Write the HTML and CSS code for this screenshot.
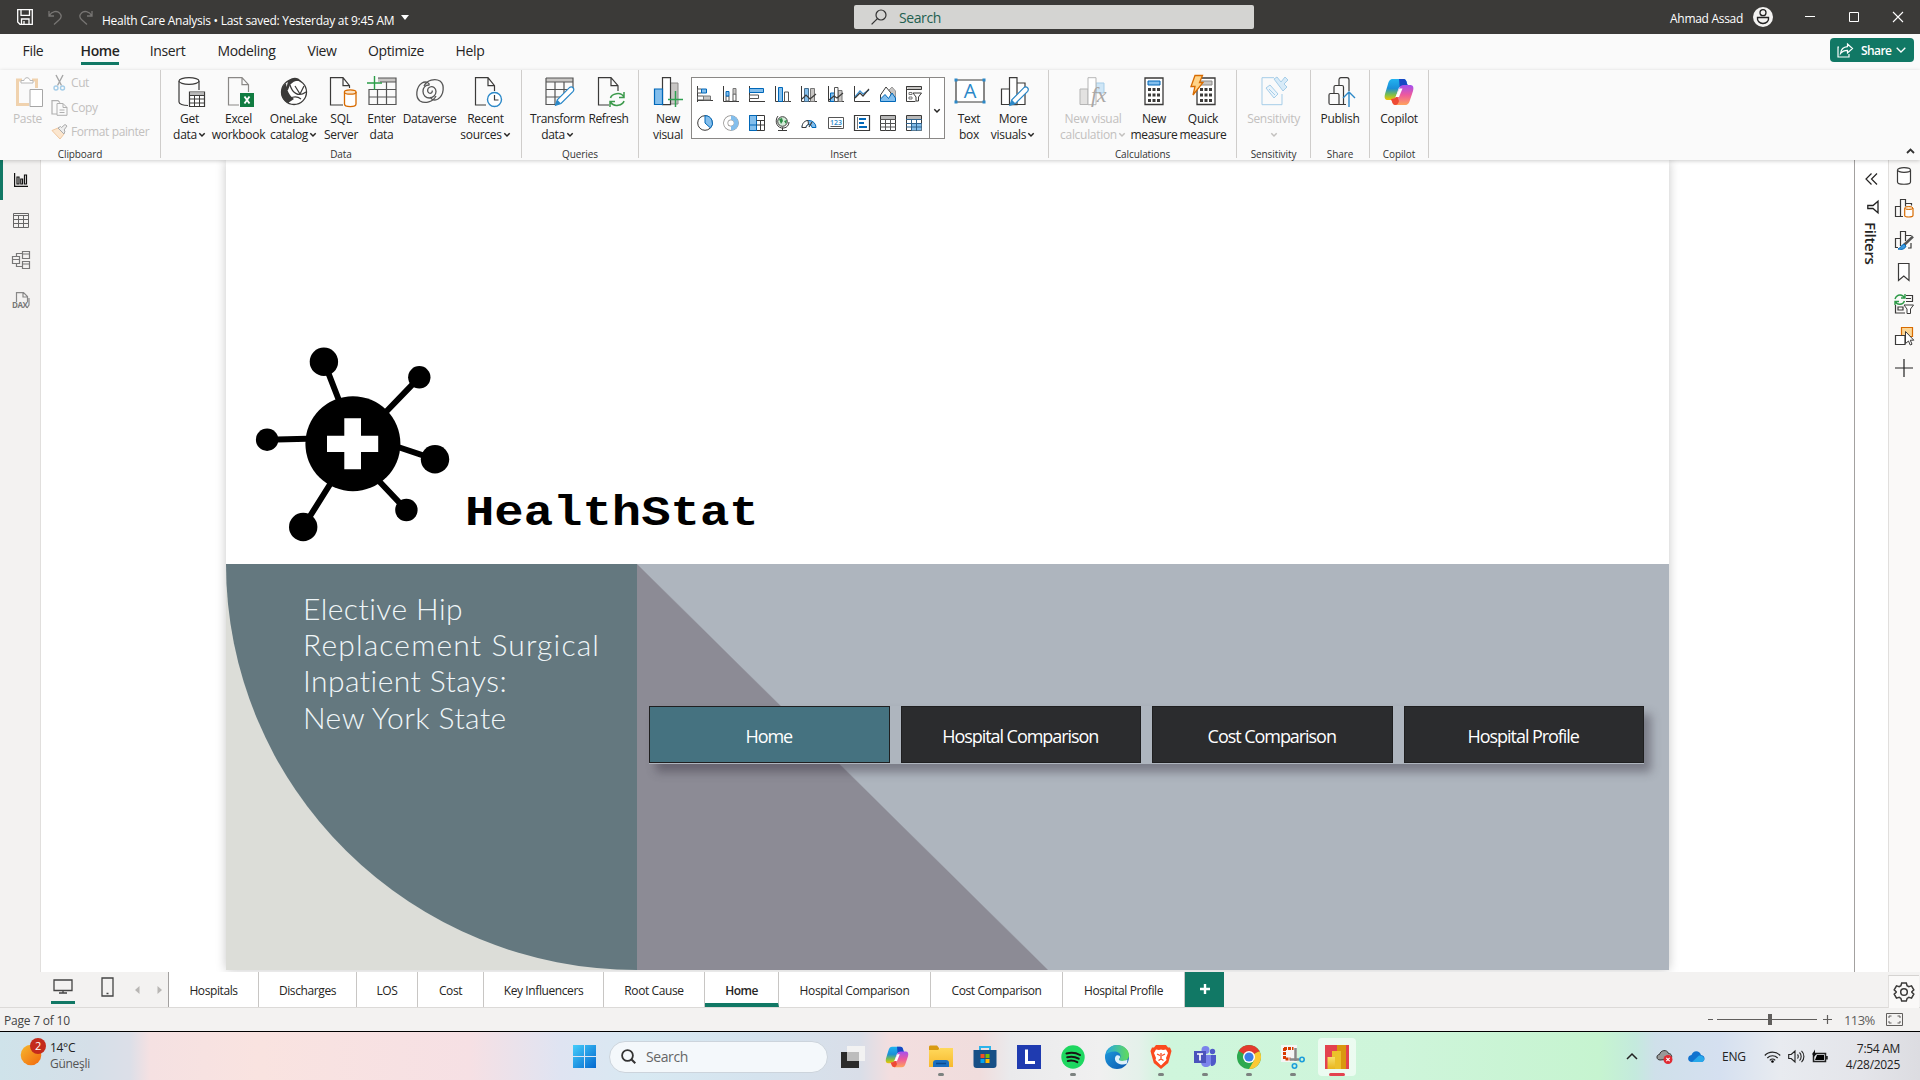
FILE: index.html
```html
<!DOCTYPE html>
<html lang="en">
<head>
<meta charset="utf-8">
<title>Health Care Analysis</title>
<link rel="stylesheet" href="styles.css">
</head>
<body>
<svg class="defs" width="0" height="0">
  <defs>
    <linearGradient id="cpA" x1="0" y1="0" x2="0" y2="1"><stop offset="0" stop-color="#22b4f0"/><stop offset=".45" stop-color="#1a8fd8"/><stop offset=".75" stop-color="#7fbf4a"/><stop offset="1" stop-color="#f5c400"/></linearGradient>
    <linearGradient id="cpB" x1="0" y1="0" x2="0" y2="1"><stop offset="0" stop-color="#a44ff0"/><stop offset=".5" stop-color="#ee5a9c"/><stop offset="1" stop-color="#ffa45c"/></linearGradient>
    <linearGradient id="edge" x1="0" y1="0" x2="1" y2="1"><stop offset="0" stop-color="#1f9fe0"/><stop offset="1" stop-color="#0b55ad"/></linearGradient>
    <linearGradient id="edge2" x1="0" y1="0" x2="1" y2="0"><stop offset="0" stop-color="#27a8e0"/><stop offset="1" stop-color="#62dc58"/></linearGradient>
    <linearGradient id="sun" x1="0" y1="0" x2="1" y2="1"><stop offset="0" stop-color="#f6b92e"/><stop offset="1" stop-color="#f2660c"/></linearGradient>
    <linearGradient id="win" x1="0" y1="0" x2="1" y2="1"><stop offset="0" stop-color="#45cdfb"/><stop offset="1" stop-color="#0468cf"/></linearGradient>
    <linearGradient id="fold" x1="0" y1="0" x2="0" y2="1"><stop offset="0" stop-color="#ffd95c"/><stop offset="1" stop-color="#f7b92e"/></linearGradient>
    <linearGradient id="pbi" x1="0" y1="0" x2="0" y2="1"><stop offset="0" stop-color="#f7df6a"/><stop offset="1" stop-color="#e8b51c"/></linearGradient>
    <symbol id="chev" viewBox="0 0 8 6"><path d="M1.3 1.3 4 4l2.7-2.7" fill="none" stroke="currentColor" stroke-width="1.5"/></symbol>
    <symbol id="copilot" viewBox="0 0 30 28">
      <path d="M9 1h10c3 0 3.500 2 4.200 5l.8 2h-5c-3 0-4 1-5 4l-2 6c-1 3-2 4-5 4H4c-3 0-4-2-3-6L4 6c1-3.500 2-5 5-5z" fill="url(#cpA)"/>
      <path d="M15 1h4c3 0 3.500 2 4.200 5l.8 2h-5c-1.500 0-2.500.3-3.300 1z" fill="#1747c4"/>
      <path d="M21 27H12c-3 0-3.500-2-4.200-4L7 21c3 0 5-1 6-4l2-6c1-3 2-4 5-4h6c3 0 4 2 3 6l-3 9c-1 3.500-2 5-5 5z" fill="url(#cpB)"/>
      <path d="M7 21c3 0 5-1 6-3l2 5c-1 3-2 4-3.500 4C9 27 8.500 25 7.800 23z" fill="#ee4a34"/>
      <path d="M15.500 10.500h3L15 19h-3.500z" fill="#fff"/>
    </symbol>
    <symbol id="pencil" viewBox="0 0 22 22"><path d="M1 21l2-6L16 2c3-2 6 1 4 4L7 19z" fill="#fff" stroke="#2b88c8" stroke-width="1.300"/><path d="M1 21l2-6 4 4z" fill="#2b88c8"/></symbol>
  </defs>
</svg>

<header class="titlebar">
  <div class="title-left">
    <svg class="i-save" width="16" height="16" viewBox="0 0 16 16"><path d="M.7.7h14.600v14.600H3L.7 13zM4 .7v5.600h8.500V.7M4.500 15v-5h7.500v5M7 15v-3" fill="none" stroke="#fff" stroke-width="1.300"/></svg>
    <svg class="i-undo" width="14" height="15" viewBox="0 0 14 15"><path d="M1 1v5h5M1 6C4 1 9 .5 11.500 3S13.500 8 11 10l-5 4.500" fill="none" stroke="#777573" stroke-width="1.300"/></svg>
    <svg class="i-redo" width="14" height="15" viewBox="0 0 14 15"><path d="M13 1v5H8M13 6C10 1 5 .5 2.500 3S.5 8 3 10l5 4.500" fill="none" stroke="#777573" stroke-width="1.300"/></svg>
    <span class="doc-name">Health Care Analysis • Last saved: Yesterday at 9:45 AM</span>
    <svg width="8" height="5" viewBox="0 0 8 5"><path d="M0 0h8L4 5z" fill="#fff"/></svg>
  </div>
  <div class="title-search">
    <svg width="16" height="16" viewBox="0 0 16 16"><circle cx="10" cy="6" r="5" fill="none" stroke="#333" stroke-width="1.200"/><path d="M6.400 9.600.6 15.400" stroke="#333" stroke-width="1.300"/></svg>
    <span>Search</span>
  </div>
  <div class="title-right">
    <span class="user">Ahmad Assad</span>
    <svg class="avatar" width="20" height="20" viewBox="0 0 20 20"><circle cx="10" cy="10" r="10" fill="#f3f2f1"/><circle cx="10" cy="5.700" r="3" fill="none" stroke="#222" stroke-width="1.300"/><path d="M4.500 10.500h11c.6 3.500-2 6-5.500 6s-6-2.500-5.500-6z" fill="none" stroke="#222" stroke-width="1.400"/></svg>
    <svg class="win-b" width="10" height="10" viewBox="0 0 10 10"><path d="M0 4.500h10" stroke="#fff"/></svg>
    <svg class="win-b" width="10" height="10" viewBox="0 0 10 10"><path d="M.5.5h9v9h-9z" fill="none" stroke="#fff"/></svg>
    <svg class="win-b" width="10" height="10" viewBox="0 0 10 10"><path d="M0 0l10 10M10 0 0 10" stroke="#fff" stroke-width="1.100"/></svg>
  </div>
</header>

<nav class="menu">
  <div class="menu-tabs">
    <span>File</span><span class="on">Home</span><span>Insert</span><span>Modeling</span><span>View</span><span>Optimize</span><span>Help</span>
  </div>
  <div class="share">
    <svg width="17" height="15" viewBox="0 0 17 15"><path d="M2 4H1v10h11v-3M10.500 1l5 4.500-5 4.500V7.300C7 7.300 5 8.500 3.500 10.500 4 6.500 6.500 4 10.500 3.700z" fill="none" stroke="#fff" stroke-width="1.200"/></svg>
    <span>Share</span>
    <svg width="10" height="6" viewBox="0 0 10 6"><path d="M.7.7 5 5 9.300.7" fill="none" stroke="#fff" stroke-width="1.300"/></svg>
  </div>
</nav>

<section class="ribbon">
  <div class="group g-clip">
    <div class="tools">
      <div class="btn dim nudge"><svg class="ico" width="28" height="30" viewBox="0 0 28 30"><path d="M6 3H1.500v24.500H13M16 3h4.500v8" fill="none" stroke="#f0d2ae" stroke-width="3"/><path d="M5 6V3.500h3C8.500-.2 13.500-.2 14 3.500h3V6z" fill="#fff" stroke="#b8b8b8"/><path d="M14 12.500h12.500v17H14z" fill="#fff" stroke="#a6a6a6"/></svg><span>Paste</span></div>
      <div class="clip-list dim">
        <div><svg width="17" height="16" viewBox="0 0 17 16"><path d="M5 0l5.500 10.500M12 0 6.500 10.500" stroke="#a6a6a6" stroke-width="1.400"/><circle cx="5" cy="13" r="2" fill="none" stroke="#a5cde8" stroke-width="1.400"/><circle cx="11.500" cy="13" r="2" fill="none" stroke="#a5cde8" stroke-width="1.400"/></svg><span>Cut</span></div>
        <div><svg width="17" height="16" viewBox="0 0 17 16"><path d="M6 14H1V.7h6l2 2" fill="none" stroke="#b0b0b0" stroke-width="1.200"/><path d="M6 3.500h6l4 4V15.300H6zM12 3.500v4h4M8.500 10h5M8.500 12.500h5" fill="none" stroke="#b0b0b0"/></svg><span>Copy</span></div>
        <div><svg width="17" height="16" viewBox="0 0 17 16"><path d="M1 6.500 7 4l6 6-4 5z" fill="#fbe6cf" stroke="#f0c8a0"/><path d="M7 4l6 6 1-3-1-1 3-4-2-1.500-3.500 3-1-1z" fill="#eee" stroke="#aaa"/></svg><span>Format painter</span></div>
      </div>
    </div>
    <div class="gname">Clipboard</div>
  </div>

  <div class="group g-data">
    <div class="tools">
      <div class="btn nudge"><svg class="ico" width="28" height="30" viewBox="0 0 28 30"><path d="M1 4v21c0 2 4 3.500 9 3.500M21 4v9" fill="none" stroke="#3b3a39" stroke-width="1.200"/><ellipse cx="11" cy="4" rx="10" ry="3.300" fill="#fff" stroke="#3b3a39" stroke-width="1.200"/><path d="M11.500 15h15v14.500h-15z" fill="#fff" stroke="#3b3a39" stroke-width="1.200"/><path d="M12 15.500h14v3H12z" fill="#b9b9b9"/><path d="M11.500 18.500h15M11.500 22h15M11.500 26h15M16.500 18.500v11M21.500 18.500v11" stroke="#3b3a39"/></svg><span>Get<br>data<svg class="chev"><use href="#chev"/></svg></span></div>
      <div class="btn nudge"><svg class="ico" width="28" height="30" viewBox="0 0 28 30"><path d="M12 28H1.500V.7H15l6.500 7V15M15 .7v7h6.500" fill="none" stroke="#8a8886" stroke-width="1.200"/><path d="M13 16h14v14H13z" fill="#107c41"/><path d="M17.500 19.500l5 7M22.500 19.500l-5 7" stroke="#fff" stroke-width="1.900"/></svg><span>Excel<br>workbook</span></div>
      <div class="btn"><svg class="ico" width="28" height="30" viewBox="0 0 28 30"><circle cx="14" cy="15" r="12.500" fill="#fff" stroke="#3b3a39" stroke-width="1.300"/><path d="M8 4C12-.5 18-.5 21 4c-4-1-8 0-11 4l-2 5-2 0zM6 6c1 8 3 12 8 16l-6 4C0 22-1 11 6 6z" fill="#3b3a39"/><path d="M10 8c2 7 8 13 16 7M8 26c0-6 8-8 13-4M15 9l5 8 4-8" fill="none" stroke="#3b3a39" stroke-width="1.200"/></svg><span>OneLake<br>catalog<svg class="chev"><use href="#chev"/></svg></span></div>
      <div class="btn nudge"><svg class="ico" width="28" height="30" viewBox="0 0 28 30"><path d="M14 28H1.500V.7H14l6.500 8V11M14 .7v8h6.500" fill="none" stroke="#3b3a39" stroke-width="1.200"/><path d="M15.500 15v12c0 3.500 11.500 3.500 11.500 0V15" fill="#fff" stroke="#d86b00" stroke-width="1.300"/><ellipse cx="21.200" cy="15" rx="5.800" ry="2.200" fill="#fbe3c6" stroke="#d86b00" stroke-width="1.300"/></svg><span>SQL<br>Server</span></div>
      <div class="btn"><svg class="ico" width="30" height="30" viewBox="0 0 30 30"><path d="M11 1h18v4H11z" fill="#c8c6c4"/><path d="M2 12v15.500h27V1H11M29 5H13M2 12.500h27M2 20h27M10.500 12v15.500M19.500 5v22.500" fill="none" stroke="#555" stroke-width="1.200"/><path d="M7.500-1v14M0 6h15" stroke="#2b9d48" stroke-width="1.400"/></svg><span>Enter<br>data</span></div>
      <div class="btn"><svg class="ico" width="30" height="30" viewBox="0 0 30 30"><g fill="none" stroke="#555" stroke-width="1.300"><path d="M21 19c-3 6-11 8-16 5-5-4-4-14 2-18 4-2.500 8 .5 7 2-4 0-6 3-6 6.500 0 4 3 6.500 6.500 6.500S21 18 21 14.500 18 9 15 10s-3 5-1 6 4-1 3-2.500"/><path d="M9 9c3-6 11-8 16-5 5 4 4 14-2 18-4 2.500-8-.5-7-2"/></g></svg><span>Dataverse</span></div>
      <div class="btn nudge"><svg class="ico" width="28" height="30" viewBox="0 0 28 30"><path d="M12 28H1.500V.7H14l6.500 8V14M14 .7v8h6.500" fill="none" stroke="#3b3a39" stroke-width="1.200"/><circle cx="20.500" cy="22.500" r="7" fill="#fff" stroke="#2b88c8" stroke-width="1.400"/><path d="M20.500 18v5h4" fill="none" stroke="#3b3a39" stroke-width="1.200"/></svg><span>Recent<br>sources<svg class="chev"><use href="#chev"/></svg></span></div>
    </div>
    <div class="gname">Data</div>
  </div>

  <div class="group g-query">
    <div class="tools">
      <div class="btn nudge"><svg class="ico" width="30" height="30" viewBox="0 0 30 30"><path d="M1 1h27v4H1z" fill="#c8c6c4"/><path d="M1 1h27v11M1 1v26.500h10M1 5h27M1 12.500h23M1 20h15M10 5v22M19 5v12" fill="none" stroke="#555" stroke-width="1.200"/><use href="#pencil" x="9.500" y="8.500" width="20.500" height="21"/></svg><span>Transform<br>data<svg class="chev"><use href="#chev"/></svg></span></div>
      <div class="btn nudge"><svg class="ico" width="28" height="30" viewBox="0 0 28 30"><path d="M12 28H1.500V.7H14l7 8V14M14 .7v8h7" fill="none" stroke="#3b3a39" stroke-width="1.200"/><path d="M13.500 21c1-4 10-7 13.500-1M27 15v5.500h-5M27 24c-1 4-10 7-13.500 1M13 30v-5.500h5" fill="none" stroke="#3c9a4c" stroke-width="1.500"/></svg><span>Refresh</span></div>
    </div>
    <div class="gname">Queries</div>
  </div>

  <div class="group g-insert">
    <div class="tools">
      <div class="btn"><svg class="ico" width="30" height="30" viewBox="0 0 30 30"><path d="M17 6h8v21h-8z" fill="#c8c6c4" stroke="#8a8886"/><path d="M9.500.7h8v27h-8z" fill="#fff" stroke="#3b3a39" stroke-width="1.200"/><path d="M1.500 12h8v15.500h-8z" fill="#83beec" stroke="#0067b8" stroke-width="1.200"/><path d="M22.500 14v16M15 22.500h15" stroke="#2ea050" stroke-width="1.500"/></svg><span>New<br>visual</span></div>
      <div class="gallery">
        <div class="vis">
          <svg viewBox="0 0 16 16"><path d="M.5 0v16M.5 14.500H16" stroke="#3b3a39"/><path d="M.5 3h4v4h-4zM.5 10h6v4h-6z" fill="#fff" stroke="#555"/><path d="M4.500 3h5v4h-5z" fill="#83beec" stroke="#0067b8"/><path d="M6.500 10h7v4h-7z" fill="#c8c6c4" stroke="#777"/></svg>
          <svg viewBox="0 0 16 16"><path d="M.5 0v15.500H16" fill="none" stroke="#3b3a39"/><path d="M3 10h3v5H3zM10 8h3v7h-3z" fill="#fff" stroke="#555"/><path d="M3 5.500h3V10H3z" fill="#83beec" stroke="#0067b8"/><path d="M10 2.500h3V8h-3z" fill="#c8c6c4" stroke="#777"/></svg>
          <svg viewBox="0 0 16 16"><path d="M.5 0v16M.5 15.500H16" stroke="#3b3a39"/><path d="M.5 2.500h14v4H.5z" fill="#83beec" stroke="#0067b8"/><path d="M.5 9h9v3.500h-9z" fill="#fff" stroke="#555"/></svg>
          <svg viewBox="0 0 16 16"><path d="M.5 0v15.500H16" fill="none" stroke="#3b3a39"/><path d="M3.500 1.500h4v14h-4z" fill="#83beec" stroke="#0067b8"/><path d="M9.500 6h4v9.500h-4z" fill="#fff" stroke="#555"/></svg>
          <svg viewBox="0 0 16 16"><path d="M.5 0v15.500H16" fill="none" stroke="#3b3a39"/><path d="M3.500 2.500h4v13h-4z" fill="#83beec" stroke="#4a6f8c"/><path d="M9.500 2.500h4v13h-4z" fill="#c8c6c4" stroke="#777"/><path d="M1 13l4-4 4 4 6-5" fill="none" stroke="#3b3a39" stroke-width="1.200"/></svg>
          <svg viewBox="0 0 16 16"><path d="M.5 0v15.500H16" fill="none" stroke="#3b3a39"/><path d="M2.500 7h4v8.500h-4z" fill="#83beec" stroke="#0067b8"/><path d="M10 4.500h4v11h-4z" fill="#c8c6c4" stroke="#777"/><path d="M6.500 1.500H10v14H6.500z" fill="#fff" stroke="#555"/><path d="M1 14l5-4 3 2 6-5" fill="none" stroke="#3b3a39" stroke-width="1.200"/></svg>
          <svg viewBox="0 0 16 16"><path d="M.5 0v15.500H16" fill="none" stroke="#3b3a39"/><path d="M1 11l5-6 3 3 6-4" fill="none" stroke="#3a8fd0" stroke-width="1.300"/><path d="M1 12l5-5 3 3 6-7" fill="none" stroke="#3b3a39" stroke-width="1.200"/></svg>
          <svg viewBox="0 0 16 16"><path d="M8 5l4-4 3.500 4v10H8z" fill="#c8c6c4" stroke="#999"/><path d="M.5 15V9L6 1l5 6v8z" fill="#fff" stroke="#3b3a39"/><path d="M.5 15.500V13L5 8.500l3.500 4L12 7l3.500 5v3.500z" fill="#83beec" stroke="#0067b8"/></svg>
          <svg viewBox="0 0 16 16"><path d="M.5.500h15v3H.5zM.5.500v15h9" fill="#c8c6c4" stroke="#3b3a39"/><path d="M1 4h8v11H1z" fill="#fff"/><path d="M3 6.500h3v2H3zM3 11h3v2H3z" fill="none" stroke="#777"/><path d="M7 7h8.500L12.500 11v4h-2.500v-4z" fill="#fff" stroke="#3b3a39"/></svg>
          <svg viewBox="0 0 16 16"><circle cx="8" cy="8" r="7.300" fill="#fff" stroke="#3b3a39"/><path d="M8 .7A7.300 7.300 0 0 1 13.500 13L8 8z" fill="#83beec" stroke="#0067b8"/></svg>
          <svg viewBox="0 0 16 16"><circle cx="8" cy="8" r="5.300" fill="none" stroke="#8a8886" stroke-width="5"/><circle cx="8" cy="8" r="5.300" fill="none" stroke="#fff" stroke-width="3.600"/><path d="M8 2.700A5.300 5.300 0 0 1 8 13.300" fill="none" stroke="#83beec" stroke-width="4.500"/></svg>
          <svg viewBox="0 0 16 16"><path d="M.5.500h15v15H.5z" fill="#fff" stroke="#3b3a39"/><path d="M.5.500h7v15h-7zM.5 10h7" fill="#83beec" stroke="#0067b8"/><path d="M7.500 5.500h8M11.500 5.500v10M11.500 10H16M7.500 10h4" stroke="#3b3a39"/></svg>
          <svg viewBox="0 0 16 16"><circle cx="7.500" cy="6.500" r="4.800" fill="#d5ecd9" stroke="#3b3a39"/><path d="M4 4l3-1 1 3-2 3zM9 6l3-1-1 4z" fill="#2c8c45"/><path d="M3 1C-1 6 2 14 9 13M9 13c3-.5 5-3 5-6M3 15.500h9M7.500 12.500v3" fill="none" stroke="#3b3a39"/></svg>
          <svg viewBox="0 0 16 16"><path d="M1 12.500a7 7 0 0 1 14 0h-4a3 3 0 0 0-6 0z" fill="#83beec" stroke="#0067b8"/><path d="M1 12.500C1 8 4 5.500 7 5.500l.5 4C6 9.500 5 11 5 12.500z" fill="#fff" stroke="#3b3a39"/><path d="M8 12l3-5" stroke="#3b3a39" stroke-width="1.200"/></svg>
          <svg viewBox="0 0 16 16"><path d="M.5 2.500h15v11H.5zM2.500 11.500h11" fill="#fff" stroke="#555"/><text x="8" y="10" class="v123">123</text></svg>
          <svg viewBox="0 0 16 16"><path d="M.5.500h15v15H.5z" fill="#fff" stroke="#3b3a39" stroke-width="1.200"/><path d="M3.500 2v12" stroke="#777"/><path d="M5 4h7M5 8h5M5 12h8" stroke="#0067b8" stroke-width="2"/></svg>
          <svg viewBox="0 0 16 16"><path d="M.5.500h15v15H.5z" fill="#fff" stroke="#3b3a39"/><path d="M1 1h14v3H1z" fill="#b9b9b9"/><path d="M0 4.500h16M0 8.500h16M0 12h16M5.500 4v12M10.500 4v12" stroke="#555"/></svg>
          <svg viewBox="0 0 16 16"><path d="M.5.500h15v15H.5z" fill="#fff" stroke="#3b3a39"/><path d="M1 1h14v3H1z" fill="#b9b9b9"/><path d="M5.500 8.500h10v7h-10z" fill="#83beec"/><path d="M0 4.500h16M0 8.500h16M0 12h16M5.500 4v12M10.500 4v12" stroke="#2f628c"/></svg>
        </div>
        <div class="more"><svg width="8" height="6"><use href="#chev"/></svg></div>
      </div>
      <div class="btn"><svg class="ico" width="31" height="30" viewBox="0 0 31 30"><path d="M2 3h28v22H2z" fill="#fff" stroke="#3b3a39" stroke-width="1.200"/><path d="M.5 1.500h3v3h-3zM28.500 1.500h3v3h-3zM.5 23.500h3v3h-3zM28.500 23.500h3v3h-3z" fill="#2b88c8"/><text x="16" y="21" class="bigA">A</text></svg><span>Text<br>box</span></div>
      <div class="btn nudge"><svg class="ico" width="30" height="30" viewBox="0 0 30 30"><path d="M1.500 12h8v15.500h-8zM17 6h8v21.500h-8zM9.500.7h7.500v27H9.500z" fill="#fff" stroke="#3b3a39" stroke-width="1.200"/><use href="#pencil" x="9" y="8.500" width="20.500" height="21"/></svg><span>More<br>visuals<svg class="chev"><use href="#chev"/></svg></span></div>
    </div>
    <div class="gname">Insert</div>
  </div>

  <div class="group g-calc">
    <div class="tools">
      <div class="btn dim"><svg class="ico" width="28" height="30" viewBox="0 0 28 30"><path d="M17 6h8v10h-8z" fill="#cfe6f6" stroke="#a5cde8"/><path d="M1 12h8v15.500H1z" fill="#e3e2e1" stroke="#b5b5b5"/><path d="M9 .7h8v27H9z" fill="#fff" stroke="#b5b5b5"/><text x="12" y="25" class="fx">fx</text></svg><span>New visual<br>calculation<svg class="chev"><use href="#chev"/></svg></span></div>
      <div class="btn"><svg class="ico" width="20" height="30" viewBox="0 0 20 30"><path d="M1 1h18v26.500H1z" fill="#fff" stroke="#3b3a39" stroke-width="1.300"/><path d="M4 4h12v4H4z" fill="#83beec" stroke="#0067b8"/><path d="M5.500 11v14M10 11v14M14.500 11v14" stroke="#3b3a39" stroke-width="3" stroke-dasharray="3 2.500"/></svg><span>New<br>measure</span></div>
      <div class="btn"><svg class="ico" width="28" height="30" viewBox="0 0 28 30"><path d="M8 1h18v26.500H8z" fill="#fff" stroke="#3b3a39" stroke-width="1.300"/><path d="M11 4h12v4H11z" fill="#c8c6c4" stroke="#8a8886"/><path d="M12.500 11v14M17 11v14M21.500 11v14" stroke="#3b3a39" stroke-width="3" stroke-dasharray="3 2.500"/><path d="M6-1.500h7.500l-3 7H14L4 18l2-8.500H2z" fill="#ffd488" stroke="#d86b00" stroke-width="1.300"/></svg><span>Quick<br>measure</span></div>
    </div>
    <div class="gname">Calculations</div>
  </div>

  <div class="group g-sens">
    <div class="tools">
      <div class="btn dim"><svg class="ico" width="28" height="30" viewBox="0 0 28 30"><path d="M14 .7H2v27h20V17" fill="none" stroke="#a5cde8"/><path d="M6 11l4-3 8 9-4 4zM9 12l6 6" fill="#eaf4fb" stroke="#a5cde8"/><path d="M14 2l3-2 4 5 4-5 3 3-4 4 3 3-4 4z" fill="#d8ebf8" stroke="#a5cde8"/></svg><span>Sensitivity<br><svg class="chev"><use href="#chev"/></svg></span></div>
    </div>
    <div class="gname">Sensitivity</div>
  </div>
  <div class="group g-pub">
    <div class="tools">
      <div class="btn nudge"><svg class="ico" width="28" height="30" viewBox="0 0 28 30"><path d="M18 27.500H2.500c-1 0-1.500-.5-1.500-1.500v-8c0-1 .5-1.500 1.500-1.500H6V10c0-1 .5-1.500 1.500-1.500H11V3c0-1.500.5-2.300 2-2.300h6c1.500 0 2 .8 2 2.300v11M6 16.500h3.500c1 0 1.500.5 1.500 1.500v9.500M11 8.500h3c1 0 1.500.5 1.500 1.500v17.500" fill="none" stroke="#3b3a39" stroke-width="1.200"/><path d="M21 30V15M15 21l6-6 6 6" fill="none" stroke="#2b88c8" stroke-width="1.400"/></svg><span>Publish</span></div>
    </div>
    <div class="gname">Share</div>
  </div>
  <div class="group g-cop">
    <div class="tools">
      <div class="btn"><svg class="ico" width="30" height="28"><use href="#copilot"/></svg><span>Copilot</span></div>
    </div>
    <div class="gname">Copilot</div>
  </div>
  <svg class="collapse" width="9" height="6" viewBox="0 0 9 6"><path d="M1 5l3.500-3.500L8 5" fill="none" stroke="#333" stroke-width="1.800"/></svg>
</section>

<main class="work">
  <aside class="rail-l">
    <div class="on"><svg width="14" height="14" viewBox="0 0 14 14"><path d="M.6 0v13.400H14M3 4h2v7H3zM6.800 6h1.800v5H6.800zM10.500 2h2v9h-2z" fill="none" stroke="#111" stroke-width="1.200"/></svg></div>
    <div><svg width="16" height="15" viewBox="0 0 16 15"><path d="M.5.500h15v14H.5zM.5 2.500h15M.5 6.500h15M.5 10.500h15M5.500 2.500v12M10.500 2.500v12" fill="none" stroke="#666"/></svg></div>
    <div><svg width="18" height="18" viewBox="0 0 18 18"><path d="M.5 5.500h7v7h-7zM.5 8.500h7M10.500.500h7v7h-7zM10.500 3h7M10.500 10.500h7v7h-7zM10.500 13h7M4.500 5.500v-3h6M4.500 12.500v3h6" fill="none" stroke="#777" stroke-width="1.200"/></svg></div>
    <div><svg width="18" height="17" viewBox="0 0 18 17"><path d="M4.500 10V.6h7l4 4V10M11 .6V5h4.500M17 6v7l-2 3" fill="none" stroke="#888" stroke-width="1.200"/><text x="0" y="16" class="dax">DAX</text></svg></div>
  </aside>

  <div class="canvas">
    <div class="page">
      <div class="page-top">
        <svg class="logo" width="570" height="230" viewBox="246 334 570 230">
          <g stroke="#000" stroke-width="6"><path d="M323.900 361.700 340 403M419.300 377.300 383 415M267.100 439.700l40-1M435 459.300 395 446M406.400 510 378 480M303.200 527l27-43" fill="none"/></g>
          <circle cx="352.900" cy="443.700" r="47.500"/><circle cx="323.900" cy="361.700" r="14.200"/><circle cx="419.300" cy="377.300" r="11.200"/><circle cx="267.100" cy="439.700" r="11.200"/><circle cx="435" cy="459.300" r="14.200"/><circle cx="406.400" cy="510" r="11.200"/><circle cx="303.200" cy="527" r="14.200"/>
          <path d="M344.300 418.300H361v17.400h17.200V452H361v17.300h-16.700V452H327v-16.300h17.300z" fill="#fff"/>
          <text transform="translate(465 524.500) scale(1.020 .9)" class="brand">HealthStat</text>
        </svg>
      </div>
      <div class="page-bottom">
        <div class="teal-wrap"><div class="teal">Elective Hip<br><span class="wide">Replacement Surgical</span><br>Inpatient Stays:<br>New York State</div></div>
        <div class="grey">
          <div class="navs"><span class="on">Home</span><span>Hospital Comparison</span><span>Cost Comparison</span><span>Hospital Profile</span></div>
        </div>
      </div>
    </div>
  </div>

  <aside class="filters">
    <svg width="13" height="12" viewBox="0 0 13 12"><path d="M6.500.500 1 6l5.500 5.500M12 .5 6.500 6l5.500 5.500" fill="none" stroke="#252423" stroke-width="1.200"/></svg>
    <svg width="12" height="14" viewBox="0 0 12 14"><path d="M11 1.200v11.600L6 8.500H.8v-3H6z" fill="none" stroke="#222" stroke-width="1.300"/></svg>
    <span>Filters</span>
  </aside>

  <aside class="rail-r">
    <svg width="20" height="20" viewBox="0 0 20 20"><path d="M3.500 4v12c0 3 13 3 13 0V4" fill="#fff" stroke="#3b3a39" stroke-width="1.200"/><ellipse cx="10" cy="4" rx="6.500" ry="2.300" fill="#fff" stroke="#3b3a39" stroke-width="1.200"/></svg>
    <svg width="20" height="20" viewBox="0 0 20 20"><path d="M9 18.500H1.500v-10h5M6.500 18.500V1.500h5v7M11.500 5.500h6v2" fill="none" stroke="#3b3a39" stroke-width="1.200"/><path d="M10.700 10v7.500c0 2 8.300 2 8.300 0V10" fill="#fff" stroke="#d86b00" stroke-width="1.200"/><ellipse cx="14.800" cy="10" rx="4.100" ry="1.500" fill="#fbe3c6" stroke="#d86b00"/></svg>
    <svg width="20" height="20" viewBox="0 0 20 20"><path d="M4 17.500H1.500v-9h5M6.500 16V1.500h5V11M11.500 5.500h6M17 13v5h-3" fill="none" stroke="#3b3a39" stroke-width="1.200"/><path d="M19 6.500 10 15" stroke="#555" stroke-width="2.500"/><path d="M4 19c3-1 3-4 6-5l2 2c-1 3-4 4-8 3z" fill="#3d9be0" stroke="#0067b8"/></svg>
    <svg width="20" height="20" viewBox="0 0 20 20"><path d="M4.500 1.500h10.500v17l-5.200-4.500-5.300 4.500z" fill="#fff" stroke="#3b3a39" stroke-width="1.200"/></svg>
    <svg width="20" height="20" viewBox="0 0 20 20"><path d="M12 1.500h6.500v6M12 4.500h5M1.500 11v8H11M4 13h5v3H4zM12 7.500h7" fill="none" stroke="#3b3a39" stroke-width="1.200"/><path d="M1 5C3-.5 9 0 10.500 4M11 0v4H7M10.500 7C9 11 3 11.500 1.500 7.500M1 11V7.500h4" fill="none" stroke="#2e9a48" stroke-width="1.400"/><path d="M10 11h9.500l-3 4v4.500h-3.500V15z" fill="#fff" stroke="#3b3a39"/></svg>
    <svg width="20" height="20" viewBox="0 0 20 20"><path d="M7.500 1.500h11v9h-11z" fill="#fbd695" stroke="#d86b00" stroke-width="1.200"/><path d="M1.500 9.500H11v9H1.500z" fill="#fff" stroke="#3b3a39" stroke-width="1.200"/><path d="M11.500 5.500v12l3-2.500 1.700 4 1.800-.8-1.700-4h3.500z" fill="#fff" stroke="#3b3a39"/></svg>
    <svg width="20" height="20" viewBox="0 0 20 20"><path d="M10 1v18M1 10h18" stroke="#222" stroke-width="1.200"/></svg>
    <div class="gear"><svg width="22" height="22" viewBox="-11 -11 22 22"><path d="M-2.300-9h4.600l.8 2.700 1.700 1 2.700-.8 2.300 4-2 1.900v.5l2 1.900-2.300 4-2.700-.8-1.700 1-.8 2.700h-4.600l-.8-2.700-1.700-1-2.700.8-2.300-4 2-1.900v-.5l-2-1.900 2.300-4 2.700.8 1.700-1z" fill="none" stroke="#3b3a39" stroke-width="1.500"/><circle r="3.300" fill="none" stroke="#3b3a39" stroke-width="1.500"/></svg></div>
  </aside>
</main>

<div class="pagebar">
  <div class="modes">
    <div class="mode on"><svg width="20" height="15" viewBox="0 0 20 15"><path d="M1 1h18v10.500H1zM10 11.500V14M6 14h8" fill="none" stroke="#444" stroke-width="1.300"/></svg></div>
    <div class="mode"><svg width="13" height="20" viewBox="0 0 13 20"><path d="M1 1h11v18H1z" fill="none" stroke="#444" stroke-width="1.300"/><path d="M5.500 16.500h2" stroke="#444" stroke-width="1.500"/></svg></div>
    <svg class="ar" width="5" height="8" viewBox="0 0 5 8"><path d="M4.500 0v8L0 4z" fill="#b8b6b4"/></svg>
    <svg class="ar2" width="5" height="8" viewBox="0 0 5 8"><path d="M.5 0v8L5 4z" fill="#b8b6b4"/></svg>
  </div>
  <div class="tabs">
    <span>Hospitals</span><span>Discharges</span><span>LOS</span><span>Cost</span><span>Key Influencers</span><span>Root Cause</span><span class="on">Home</span><span>Hospital Comparison</span><span>Cost Comparison</span><span>Hospital Profile</span>
    <div class="add"><svg width="12" height="12" viewBox="0 0 12 12"><path d="M6 1v10M1 6h10" stroke="#fff" stroke-width="2.400"/></svg></div>
  </div>
</div>

<footer class="status">
  <span class="pg">Page 7 of 10</span>
  <div class="zoom">
    <span class="minus"></span>
    <div class="track"><i></i></div>
    <svg width="9" height="9" viewBox="0 0 9 9"><path d="M4.500 0v9M0 4.500h9" stroke="#605e5c" stroke-width="1.200"/></svg>
    <span class="pct">113%</span>
    <svg class="fit" width="17" height="13" viewBox="0 0 17 13"><path d="M.5.500h16v12H.5zM3 5V3h2.500M11.500 3H14v2M14 8v2h-2.500M5.500 10H3V8" fill="none" stroke="#605e5c"/></svg>
  </div>
</footer>

<div class="taskbar">
  <div class="weather">
    <svg width="30" height="30" viewBox="0 0 30 30"><circle cx="12" cy="17" r="10.300" fill="url(#sun)"/><circle cx="19" cy="8" r="8" fill="#c42b1c"/><text x="19" y="12" class="badge">2</text></svg>
    <div><b>14°C</b><br>Güneşli</div>
  </div>
  <div class="dock">
    <svg class="start" width="23" height="23" viewBox="0 0 23 23"><path d="M0 0h11v11H0zM12 0h11v11H12zM0 12h11v11H0zM12 12h11v11H12z" fill="url(#win)"/></svg>
    <div class="tsearch"><svg width="15" height="15" viewBox="0 0 15 15"><circle cx="6.500" cy="6.500" r="5.400" fill="none" stroke="#333" stroke-width="1.800"/><path d="M10.500 10.500l3.800 3.800" stroke="#333" stroke-width="2"/></svg><span>Search</span></div>
    <div class="app"><svg viewBox="0 0 24 24"><path d="M0 7h18v16H0z" fill="#2b2b2b"/><path d="M6 1h18v15H6z" fill="#f2f2f2"/><path d="M6 7h12v9H6z" fill="#bdbdbd"/></svg></div>
    <div class="app"><svg viewBox="0 0 24 24"><use href="#copilot" y="1" width="24" height="22"/></svg></div>
    <div class="app run"><svg viewBox="0 0 24 24"><path d="M0 2c0-1 .5-1.500 1.500-1.500H8L10 3v4H0z" fill="#d99a12"/><path d="M0 5h9l2-2h13v19H0z" fill="url(#fold)"/><path d="M4 22v-4c0-2 1-3 3-3h10c2 0 3 1 3 3v4z" fill="#1a6fc0"/><path d="M7 18.500h10" stroke="#0a4a8f" stroke-width="1.500"/></svg></div>
    <div class="app"><svg viewBox="0 0 24 24"><path d="M7 6V2h10v4" fill="none" stroke="#2eb3ea" stroke-width="2"/><path d="M.5 5h23v15c0 2-1 3-3 3h-17c-2 0-3-1-3-3z" fill="#174f86"/><path d="M7.500 9h4v4h-4z" fill="#f25022"/><path d="M12.500 9h4v4h-4z" fill="#7fba00"/><path d="M7.500 14h4v4h-4z" fill="#00a4ef"/><path d="M12.500 14h4v4h-4z" fill="#ffb900"/></svg></div>
    <div class="app"><svg viewBox="0 0 24 24"><path d="M0 0h24v24H0z" fill="#1f3bb0"/><path d="M9.500 4.500v13H18" fill="none" stroke="#fff" stroke-width="3"/></svg></div>
    <div class="app run"><svg viewBox="0 0 24 24"><circle cx="12" cy="12" r="11.700" fill="#1ed760"/><path d="M5.500 8.500c4.500-1.200 9.500-.8 13.500 1.500M6.200 12.300c4-1 8-.5 11.500 1.400M6.800 16c3.300-.8 6.500-.4 9.500 1.200" fill="none" stroke="#191414" stroke-width="2" stroke-linecap="round"/></svg></div>
    <div class="app"><svg viewBox="0 0 24 24"><circle cx="12" cy="12" r="12" fill="url(#edge)"/><path d="M1 9C3 3 7 0 12 0c7 0 12 5 12 10 0 4-3 6-6 6-2 0-4-.5-4-1.500s1.500-1 1.500-3.500c0-3-3-4.500-6-4.500C5.500 6.500 2.500 8 1 9z" fill="url(#edge2)"/><path d="M22 18.500c-4 2-11 1-12-4-.3-1.500.3-3 1.500-4 2-.5 4 .5 3.500 2-.5 1-1.300 1.300-1 2.300.5 1.500 5 1.700 8.500-.3z" fill="#dff1fb"/></svg></div>
    <div class="app run"><svg viewBox="0 0 24 24"><path d="M7 0h10l2 2.500h2L22.500 6l-.8 3-2.500 9L12 24l-7.200-6-2.500-9-.8-3L3 2.500h2z" fill="#fb4a1e"/><path d="M7 4.500l3 .5 2-.5 2 .5 3-.5L19 8l-2 5 .5 2-5.500 5.500L6.500 15 7 13 5 8z" fill="#fff"/><path d="M8 9l3 1.500M16 9l-3 1.500M12 8v6M9.500 15.500l2.500-1.500 2.500 1.500" fill="none" stroke="#fb4a1e" stroke-width="1.300"/></svg></div>
    <div class="app run"><svg viewBox="0 0 24 24"><circle cx="19.500" cy="6.500" r="2.700" fill="#5059c9"/><path d="M15 10h8v6c0 3-2 5-5 5z" fill="#5059c9"/><circle cx="12.500" cy="5" r="4" fill="#7b83eb"/><path d="M8 10h10v7c0 3.500-2 5-5 5s-5-2-5-5z" fill="#7b83eb"/><path d="M1 6h12v12H1z" fill="#4b53bc"/><path d="M4 9h6M7 9v6.500" stroke="#fff" stroke-width="1.700"/></svg></div>
    <div class="app run"><svg viewBox="0 0 24 24"><circle cx="12" cy="12" r="12" fill="#2da94f"/><path d="M12 12 1.600 6A12 12 0 0 1 22.400 6z" fill="#e33b2e"/><path d="M12 12 22.400 6A12 12 0 0 1 12 24l5.200-9z" fill="#fcc934"/><path d="M12 6.500h10.700L22.400 6 12 5z" fill="#e33b2e"/><circle cx="12" cy="12" r="6" fill="#fff"/><circle cx="12" cy="12" r="4.600" fill="#3b7de8"/></svg></div>
    <div class="app run"><svg viewBox="0 0 24 24"><path d="M0 0h16v17H0z" fill="#f5f5f5"/><path d="M3 3.500h9.500M3.500 3v11h6" fill="none" stroke="#d83b01" stroke-width="3" stroke-dasharray="3 1"/><path d="M14.500 3v13M9 14.500h9" stroke="#888" stroke-width="2.500"/><circle cx="21" cy="14.500" r="2.200" fill="none" stroke="#1c9ddb" stroke-width="1.600"/><circle cx="13.500" cy="21" r="2.200" fill="none" stroke="#1c9ddb" stroke-width="1.600"/></svg></div>
    <div class="app active"><svg viewBox="0 0 24 24"><path d="M0 0h24v24H0z" fill="#e3434f"/><path d="M12 0h9v24h-9z" fill="#d9980f"/><path d="M7 6h9v18H7z" fill="#ecc02b"/><path d="M2.500 12H10v12H2.500z" fill="url(#pbi)"/></svg></div>
  </div>
  <div class="tray">
    <svg class="t-up" width="12" height="7" viewBox="0 0 12 7"><path d="M1 6l5-5 5 5" fill="none" stroke="#222" stroke-width="1.500"/></svg>
    <svg class="t-cl" width="17" height="15" viewBox="0 0 17 15"><path d="M4 11C0 11 0 5.500 3.500 5.500 4.500 1 11 0 12.500 4.500c3 0 4 3 2.500 5.500z" fill="#999" stroke="#333"/><circle cx="12" cy="10.500" r="4.500" fill="#e02b33"/><path d="M10.300 8.800l3.400 3.400M13.700 8.800l-3.400 3.400" stroke="#fff" stroke-width="1.100"/></svg>
    <svg class="t-od" width="17" height="11" viewBox="0 0 17 11"><path d="M4 11C-1 11-1 4.500 3.500 4 5-1.500 12-.8 13 4c5 .5 4.500 7 0 7z" fill="#1173cf"/><path d="M4 11l7-6.500c6-.5 7 6.500 2 6.500z" fill="#28a8ea"/></svg>
    <span class="lang">ENG</span>
    <svg class="t-wf" width="17" height="12" viewBox="0 0 17 12"><path d="M.8 4.500c4-4.500 11.400-4.500 15.400 0M3.300 7c3-3 7.400-3 10.400 0M5.800 9.300c1.500-1.500 3.900-1.500 5.400 0" fill="none" stroke="#222" stroke-width="1.200"/><circle cx="8.500" cy="10.500" r="1.300"/></svg>
    <svg class="t-vo" width="17" height="13" viewBox="0 0 17 13"><path d="M.7 4.500v4h2.500L7 12V1L3.200 4.500zM9.500 4.500c1 1 1 3 0 4M11.500 2.500c2.200 2 2.200 6 0 8M13.500.800c3.200 3 3.200 8.400 0 11.400" fill="none" stroke="#222" stroke-width="1.100"/></svg>
    <svg class="t-ba" width="17" height="13" viewBox="0 0 17 13"><path d="M1.500 3.500h12v8h-12zM15 6v3.500" fill="none" stroke="#222" stroke-width="1.500"/><path d="M5 5h7v5H3z"/><path d="M3-.5v4h2L1 8V4.500h-1z" fill="#111"/></svg>
    <div class="clock">7:54 AM<br>4/28/2025</div>
  </div>
</div>
</body>
</html>
```
FILE: styles.css
```css
* { box-sizing: border-box; }
html, body { margin: 0; width: 1920px; height: 1080px; overflow: hidden; }
body { font-family: "Open Sans", "Noto Sans", sans-serif; font-size: 12px; color: #252423; display: flex; flex-direction: column; background: #fff; }
svg { display: block; flex: none; overflow: visible; }
.defs { position: absolute; }

/* title bar */
.titlebar { height: 34px; flex: none; background: #3b3a38; color: #fff; display: flex; align-items: stretch; }
.title-left { width: 854px; display: flex; align-items: center; padding-left: 17px; }
.i-undo { margin-left: 15px; }
.i-redo { margin-left: 17px; margin-right: 9px; }
.doc-name { letter-spacing: -.27px; width: 292px; white-space: nowrap; margin: 7px 7px 0 0; }
.title-search { width: 400px; height: 24px; margin-top: 5px; background: #d4d4d2; border-radius: 2px; display: flex; align-items: center; padding-left: 17px; gap: 12px; font-size: 14px; letter-spacing: -.4px; color: #22604f; }
.title-right { flex: 1; display: flex; align-items: center; justify-content: flex-end; padding-right: 17px; }
.user { letter-spacing: -.3px; margin: 2px 10px 0 0; }
.avatar { margin-right: 32px; }
.win-b + .win-b { margin-left: 34px; }

/* menu */
.menu { height: 36px; flex: none; background: #fafafa; display: flex; justify-content: space-between; }
.menu-tabs { display: grid; grid-template-columns: 66px 68px 67px 91px 60px 88px 60px; justify-items: center; font-size: 14px; letter-spacing: -.35px; }
.menu-tabs span { height: 31px; line-height: 33px; }
.menu-tabs .on { font-weight: 600; border-bottom: 3px solid #117865; letter-spacing: -.4px; }
.share { width: 84px; height: 24px; margin: 4px 6px 0 0; border-radius: 4px; background: #117865; color: #fff; display: flex; align-items: center; padding-left: 7px; gap: 5px; font-weight: 600; letter-spacing: -.6px; }
.share svg:first-child { margin-right: 2px; }

/* ribbon */
.ribbon { height: 90px; flex: none; background: #fafafa; display: flex; position: relative; z-index: 2; box-shadow: 0 1px 4px rgba(0,0,0,.2); letter-spacing: -.3px; }
.group { height: 88px; border-right: 1px solid #cfcdcb; display: flex; flex-direction: column; justify-content: space-between; }
.tools { display: grid; padding-top: 7px; }
.gname { text-align: center; font-size: 10px; line-height: 8px; letter-spacing: -.1px; color: #333; }
.btn { display: flex; flex-direction: column; align-items: center; text-align: center; white-space: nowrap; line-height: 16px; }
.btn .ico { height: 30px; margin-bottom: 3px; }
.btn > span { padding-top: .5px; }
.nudge .ico { margin-left: 4px; }
.chev { display: inline-block; width: 8px; height: 6px; margin-left: 1px; vertical-align: 1px; }
.dim { color: #c2c0be; }
.g-clip { width: 161px; }
.g-clip .tools { grid-template-columns: 49px 1fr; padding-left: 3px; }
.clip-list { display: flex; flex-direction: column; justify-content: space-between; height: 65px; margin-top: -2px; }
.clip-list div { display: flex; align-items: center; gap: 3px; line-height: 16px; white-space: nowrap; letter-spacing: -.4px; }
.clip-list svg { margin-left: -1px; }
.g-data { width: 361px; }
.g-data .tools { grid-template-columns: 47px 51px 59px 36px 45px 51px 61px; padding-left: 5px; }
.g-query { width: 117px; }
.g-query .tools { grid-template-columns: 55px 47px; padding-left: 8px; letter-spacing: -.4px; }
.g-insert { width: 410px; }
.g-insert .tools { grid-template-columns: 46px 254px 48px 40px; padding-left: 6px; }
.gallery { height: 62px; border: 1px solid #8a8886; background: #fff; display: flex; }
.vis { width: 238px; display: grid; grid-template-columns: repeat(9, 26.100px); grid-template-rows: 29px 29px; align-content: center; place-items: center; border-right: 1px solid #8a8886; }
.vis svg { width: 16px; height: 16px; }
.more { flex: 1; display: grid; place-items: center; padding-top: 5px; }
.v123 { font-size: 7px; font-weight: 600; letter-spacing: 0; text-anchor: middle; fill: #2b88c8; }
.bigA { font-size: 20px; text-anchor: middle; fill: #2b88c8; }
.fx { font: italic 22px "Liberation Serif", serif; fill: #a9a7a5; }
.g-calc { width: 188px; }
.g-calc .tools { grid-template-columns: 72px 50px 48px; padding-left: 8px; }
.g-sens { width: 74px; }
.g-pub, .g-cop { width: 59px; }
.collapse { margin: 78px 5px 0 auto; }

/* work area */
.work { height: 812px; flex: none; display: flex; }
.rail-l { width: 41px; background: #f3f2f1; border-right: 1px solid #e1dfdd; }
.rail-l div { height: 40px; display: grid; place-items: center; border-left: 3px solid transparent; padding-right: 2px; }
.rail-l .on { border-color: #117865; }
.dax { font-size: 8px; font-weight: 700; letter-spacing: -.5px; fill: #777; }
.canvas { width: 1813px; padding-left: 185px; overflow: hidden; }
.page { width: 1443px; height: 810px; background: #fff; box-shadow: 0 0 10px rgba(0,0,0,.22); }
.page-top { height: 404px; padding: 174px 0 0 20px; }
.brand { font: bold 48px "Liberation Mono", monospace; }
.page-bottom { height: 406px; display: flex; }
.teal-wrap { width: 411px; background: #dcddd8; }
.teal { height: 100%; background: #64787f; border-bottom-left-radius: 100%; padding: 26px 0 0 77px; font: 300 30px/36.200px Lato, sans-serif; letter-spacing: .45px; font-variant-ligatures: none; color: #f0f6f8; white-space: nowrap; }
.teal .wide { letter-spacing: 1.150px; }
.grey { flex: 1; background: linear-gradient(to top right, #8c8b95 49.900%, #aeb5be 50.100%) 0 0 / 411px 406px no-repeat #aeb5be; padding: 142px 0 0 12px; }
.navs { width: 995px; height: 58px; display: grid; grid-template-columns: repeat(4, 1fr); gap: 11px; background: #aeb5be; padding-bottom: 1px; box-shadow: 7px 8px 9px rgba(50,45,60,.42); }
.navs span { background: #2b2c2e; border: 1px solid #1f1f20; color: #fff; display: grid; place-items: center; font-size: 18px; font-weight: 500; letter-spacing: -1.050px; padding: 2px 1px 0 0; }
.navs .on { background: #457280; }
.filters { width: 34px; border-left: 1px solid #a3a1a0; display: flex; flex-direction: column; align-items: center; padding-top: 13px; }
.filters svg + svg { margin: 15px 0 0 3px; }
.filters span { writing-mode: vertical-rl; font-size: 15px; font-weight: 600; letter-spacing: -.3px; margin: 8px 2px 0 0; line-height: 18px; }
.rail-r { width: 32px; background: #faf9f8; border-left: 1px solid #e1dfdd; display: flex; flex-direction: column; align-items: center; gap: 12px; padding-top: 6px; padding-right: 2px; }

/* page tabs */
.pagebar { height: 36px; flex: none; background: #f3f2f1; border-bottom: 1px solid #dcdad8; display: flex; }
.modes { width: 168px; display: flex; align-items: center; padding-left: 51px; }
.mode { width: 24px; height: 31px; display: grid; place-items: center; }
.mode.on { border-bottom: 3px solid #117865; padding-bottom: 4px; height: 28px; }
.mode + .mode { margin: -6px 0 0 20px; }
.ar { margin-left: 16px; }
.ar2 { margin-left: 17px; }
.tabs { display: grid; grid-template-columns: 90px 98px 61px 66px 120px 101px 74px 152px 132px 122px 39px; border-left: 1px solid #a3a1a0; }
.tabs span { background: #fff; border-right: 1px solid #c8c6c4; display: grid; place-items: center; font-size: 12px; letter-spacing: -.4px; white-space: nowrap; padding-top: 1px; }
.tabs .on { font-weight: 600; border-bottom: 4px solid #117865; padding-top: 5px; letter-spacing: -.5px; }
.add { background: #117865; display: grid; place-items: center; padding-bottom: 2px; }
.gear { width: 31px; height: 33px; margin: auto 0 -36px; border-top: 1px solid #d5d3d1; border-left: 1px solid #e1dfdd; background: #faf9f8; display: grid; place-items: center; z-index: 3; }

/* status */
.status { height: 24px; flex: none; background: #f3f2f1; border-bottom: 1px solid #000; display: flex; justify-content: space-between; align-items: center; padding: 2px 17px 0 4px; color: #444; }
.pg { letter-spacing: -.2px; }
.zoom { display: flex; align-items: center; color: #605e5c; margin-top: -2px; }
.minus { width: 5px; height: 1.500px; background: #605e5c; margin-right: 4px; }
.track { width: 100px; height: 1px; background: #605e5c; display: flex; align-items: center; justify-content: center; margin-right: 6px; }
.track i { width: 4px; height: 11px; background: #605e5c; margin-left: 6px; }
.pct { width: 42px; margin-left: 12px; font-size: 13px; letter-spacing: -.6px; }

/* taskbar */
.taskbar { height: 49px; flex: none; display: flex; align-items: stretch; background: linear-gradient(90deg, #cfe3ea 0, #d5dfe8 90px, #dcdfe8 130px, #f5e1e2 150px, #f9e3e0 260px, #f6e0e4 470px, #dfe4f2 560px, #d8e9f2 640px, #d5e3ee 760px, #d9dee8 860px, #f3dedf 890px, #f0dddd 980px, #eaeaec 1010px, #f0f0f0 1100px, #e4f1ea 1140px, #cff6dc 1165px, #cef5da 1400px, #c6f4d0 1600px, #c4eadd 1635px, #cfe0ea 1655px, #d5e0f0 1720px, #e8ebf0 1780px, #e4e5ea 1860px, #dcdce1 1920px); }
.weather { width: 573px; display: flex; padding: 6px 0 0 19px; gap: 1px; line-height: 16px; letter-spacing: -.3px; color: #555; }
.weather div { padding-top: 2px; font-size: 12px; }
.weather b { font-weight: 400; color: #222; }
.badge { font-size: 11px; fill: #fff; text-anchor: middle; }
.dock { width: 786px; display: flex; align-items: center; }
.tsearch { width: 219px; height: 32px; margin: 0 3px 0 13px; border-radius: 16px; background: #f4f8fb; border: 1px solid #ccd4dc; display: flex; align-items: center; gap: 10px; padding-left: 11px; font-size: 14px; color: #666; letter-spacing: -.4px; }
.app { width: 44px; height: 38px; display: grid; place-items: center; position: relative; }
.app svg { width: 24px; height: 24px; }
.run::after, .active::after { content: ""; position: absolute; left: 19px; bottom: 0; width: 6px; height: 3px; border-radius: 2px; background: #7c8280; }
.active::before { content: ""; position: absolute; inset: 0 3px; background: rgba(255,255,255,.6); border-radius: 4px; }
.active svg { z-index: 1; }
.active::after { left: 14px; width: 16px; background: #e3434f; }
.tray { flex: 1; display: flex; align-items: center; justify-content: flex-end; padding-right: 20px; color: #222; }
.t-up { margin-right: 18px; }
.t-cl { margin-right: 15px; }
.t-od { margin-right: 17px; }
.lang { width: 25px; letter-spacing: -.2px; }
.t-wf { margin-left: 17px; }
.t-vo, .t-ba { margin-left: 7px; }
.clock { width: 71px; text-align: right; line-height: 16px; font-size: 12px; letter-spacing: -.3px; }
```
